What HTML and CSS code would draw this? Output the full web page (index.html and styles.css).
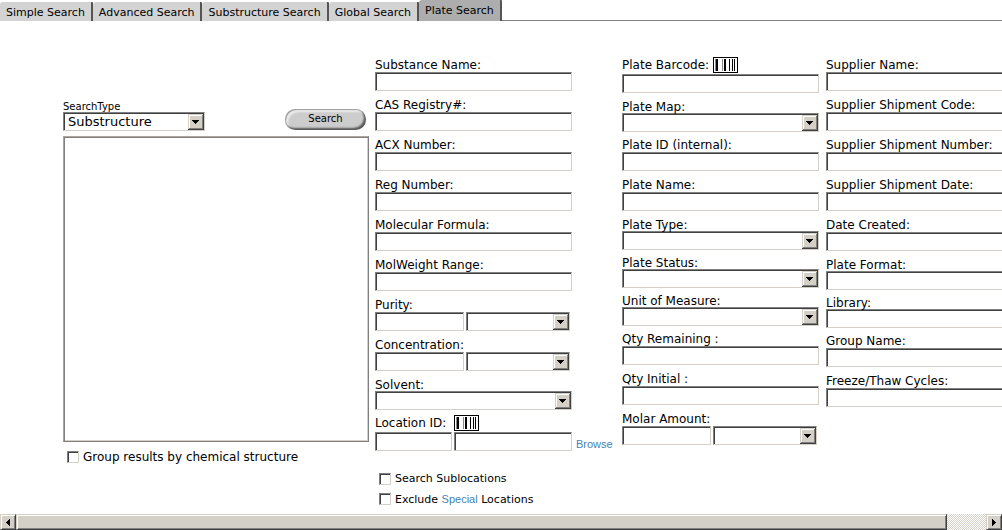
FILE: index.html
```html
<!DOCTYPE html>
<html lang="en">
<head>
<meta charset="utf-8">
<title>Plate Search</title>
<link rel="stylesheet" href="styles.css">
</head>
<body>
<svg class="defs" aria-hidden="true">
  <symbol id="barcode" viewBox="0 0 25 16" shape-rendering="crispEdges">
    <path fill="#fff" d="M0 0h25v16H0z"/>
    <path fill="#000" d="M0 0h25v16H0zM1 1v14h23V1z" fill-rule="evenodd"/>
    <path fill="#000" d="M3 2h2v12H3zM11 2h2v12h-2zM16 2h1v12h-1zM19 2h1v12h-1zM21 2h1v12h-1z"/>
    <path fill="#888" d="M2 2h1v12H2zM9 2h1v12H9z"/>
  </symbol>
</svg>
<nav class="tabs">
  <a class="tab" href="#">Simple Search</a>
  <a class="tab" href="#">Advanced Search</a>
  <a class="tab" href="#">Substructure Search</a>
  <a class="tab" href="#">Global Search</a>
  <a class="tab active" href="#">Plate Search</a>
</nav>
<main class="viewport">
  <form class="search">
    <section class="structure">
      <div class="toolbar">
        <div>
          <label class="small-label" for="type">SearchType</label>
          <select class="field type" id="type"><option>Substructure</option></select>
        </div>
        <button class="go" type="button">Search</button>
      </div>
      <div class="canvas"></div>
      <label class="check"><input type="checkbox"> Group results by chemical structure</label>
    </section>

    <section class="column">
      <div class="row"><label for="name">Substance Name:</label><input class="field" id="name"></div>
      <div class="row"><label for="cas">CAS Registry#:</label><input class="field" id="cas"></div>
      <div class="row"><label for="acx">ACX Number:</label><input class="field" id="acx"></div>
      <div class="row"><label for="reg">Reg Number:</label><input class="field" id="reg"></div>
      <div class="row"><label for="formula">Molecular Formula:</label><input class="field" id="formula"></div>
      <div class="row"><label for="weight">MolWeight Range:</label><input class="field" id="weight"></div>
      <div class="row"><label for="purity">Purity:</label>
        <div class="pair"><input class="field" id="purity"><select class="field" aria-label="Purity unit"></select></div></div>
      <div class="row"><label for="conc">Concentration:</label>
        <div class="pair"><input class="field" id="conc"><select class="field" aria-label="Concentration unit"></select></div></div>
      <div class="row tight"><label for="solvent">Solvent:</label><select class="field" id="solvent"></select></div>
      <div class="row coded"><label class="spaced" for="loc">Location ID: <svg class="barcode"><use href="#barcode"/></svg></label>
        <div class="pair location"><input class="field" id="loc"><input class="field" aria-label="Location name"><a class="link" href="#">Browse</a></div></div>
      <div class="options">
        <label class="check small"><input type="checkbox"> Search Sublocations</label>
        <div class="check small"><input type="checkbox" id="exclude"><span><label for="exclude">Exclude</label> <a class="link" href="#">Special</a> Locations</span></div>
      </div>
    </section>

    <section class="column">
      <div class="row coded"><label class="near" for="pbar">Plate Barcode:<svg class="barcode"><use href="#barcode"/></svg></label><input class="field" id="pbar"></div>
      <div class="row tight"><label for="map">Plate Map:</label><select class="field" id="map"></select></div>
      <div class="row"><label for="pid">Plate ID (internal):</label><input class="field" id="pid"></div>
      <div class="row"><label for="pname">Plate Name:</label><input class="field" id="pname"></div>
      <div class="row tight"><label for="ptype">Plate Type:</label><select class="field" id="ptype"></select></div>
      <div class="row tight"><label for="pstatus">Plate Status:</label><select class="field" id="pstatus"></select></div>
      <div class="row tight"><label for="unit">Unit of Measure:</label><select class="field" id="unit"></select></div>
      <div class="row"><label for="qrem">Qty Remaining :</label><input class="field" id="qrem"></div>
      <div class="row"><label for="qini">Qty Initial :</label><input class="field" id="qini"></div>
      <div class="row"><label for="molar">Molar Amount:</label>
        <div class="pair"><input class="field" id="molar"><select class="field" aria-label="Molar unit"></select></div></div>
    </section>

    <section class="column">
      <div class="row"><label for="sup">Supplier Name:</label><input class="field" id="sup"></div>
      <div class="row"><label for="scode">Supplier Shipment Code:</label><input class="field" id="scode"></div>
      <div class="row"><label for="snum">Supplier Shipment Number:</label><input class="field" id="snum"></div>
      <div class="row"><label for="sdate">Supplier Shipment Date:</label><input class="field" id="sdate"></div>
      <div class="row"><label for="created">Date Created:</label><input class="field" id="created"></div>
      <div class="row tight"><label for="format">Plate Format:</label><select class="field" id="format"></select></div>
      <div class="row tight"><label for="library">Library:</label><select class="field" id="library"></select></div>
      <div class="row"><label for="group">Group Name:</label><input class="field" id="group"></div>
      <div class="row"><label for="cycles">Freeze/Thaw Cycles:</label><input class="field" id="cycles"></div>
    </section>
  </form>
</main>
<div class="scrollbar">
  <button class="bevel arrow" type="button" aria-label="Scroll left"><svg viewBox="0 0 4 7" shape-rendering="crispEdges"><path d="M3 0h1v7H3zM2 1h1v5H2zM1 2h1v3H1zM0 3h1v1H0z"/></svg></button>
  <div class="track"><div class="bevel thumb"></div></div>
  <button class="bevel arrow" type="button" aria-label="Scroll right"><svg viewBox="0 0 4 7" shape-rendering="crispEdges"><path d="M0 0h1v7H0zM1 1h1v5H1zM2 2h1v3H2zM3 3h1v1H3z"/></svg></button>
</div>
</body>
</html>
```
FILE: styles.css
```css
* { box-sizing: border-box; }

body {
  margin: 0;
  height: 100vh;
  display: flex;
  flex-direction: column;
  overflow: hidden;
  background: #fff;
  color: #000;
  font: 12px/16px Verdana, "DejaVu Sans", sans-serif;
}

.defs { display: none; }

.tabs {
  display: flex;
  align-items: flex-end;
  height: 21px;
  flex: none;
  background: linear-gradient(#808080, #808080) 0 100% / 100% 1px no-repeat;
}

.tab {
  height: 19px;
  padding: 0 6px;
  border-right: 2px solid #555;
  border-radius: 3px 1px 0 0;
  background: #d3d3d3;
  color: #000;
  font-size: 11px;
  line-height: 21px;
  text-decoration: none;
  white-space: nowrap;
}

.tab.active {
  height: 21px;
  background: #adadad;
}

.viewport {
  flex: 1;
  min-height: 0;
  overflow: hidden;
}

.search {
  display: grid;
  grid-template-columns: 306px 241px 198px 198px;
  column-gap: 6px;
  width: max-content;
  padding: 35px 0 0 63px;
}

.structure { padding-top: 45px; }

.toolbar {
  display: flex;
  justify-content: space-between;
  align-items: flex-end;
  padding-right: 3px;
}

.small-label {
  display: block;
  font-size: 10px;
  line-height: 11px;
}

.field {
  display: block;
  width: 100%;
  height: 19px;
  margin: 0;
  padding: 0 2px;
  border: 1px solid;
  border-color: #808080 #d4d0c8 #d4d0c8 #808080;
  border-radius: 0;
  background-color: #fff;
  box-shadow: inset 1px 1px #404040;
  color: #000;
  font: inherit;
  outline: 0;
}

select.field {
  appearance: none;
  padding: 0 20px 0 4px;
  background: url("data:image/svg+xml,%3Csvg xmlns='http://www.w3.org/2000/svg' width='16' height='16' shape-rendering='crispEdges'%3E%3Cpath fill='%23404040' d='M0 0h16v16H0z'/%3E%3Cpath fill='%23d4d0c8' d='M0 0h15v15H0z'/%3E%3Cpath fill='%23808080' d='M1 1h14v14H1z'/%3E%3Cpath fill='%23fff' d='M1 1h13v13H1z'/%3E%3Cpath fill='%23d4d0c8' d='M2 2h12v12H2z'/%3E%3Cpath d='M4 6h7v1H4zM5 7h5v1H5zM6 8h3v1H6zM7 9h1v1H7z'/%3E%3C/svg%3E") right 1px / 16px 16px no-repeat #fff;
}

select.type {
  width: 142px;
  font-size: 13px;
}

.go {
  width: 81px;
  height: 21px;
  margin-bottom: 1px;
  padding: 0 0 2px;
  border: 0;
  border-radius: 11px;
  background: #ccc;
  box-shadow: inset -2px -2px 2px #555, inset 1px 1px 1px #999, inset 3px 3px 2px #eee;
  color: #000;
  font: inherit;
  font-size: 10px;
}

.canvas {
  height: 306px;
  margin-top: 5px;
  border: 1px solid;
  border-color: #aaa69e #808080 #808080 #aaa69e;
  box-shadow: inset 1px 1px #808080, inset -1px -1px #d4d0c8;
}

.check {
  display: flex;
  align-items: center;
  gap: 4px;
}

.check input {
  appearance: none;
  flex: none;
  width: 12px;
  height: 12px;
  margin: 0;
  border: 1px solid;
  border-color: #808080 #d4d0c8 #d4d0c8 #808080;
  box-shadow: inset 1px 1px #404040;
  background: #fff;
}

.structure .check { padding: 7px 0 0 4px; }

.small {
  height: 20px;
  font-size: 11px;
}

.row {
  padding-bottom: 5px;
  width: 197px;
}

.row > label {
  display: block;
  height: 16px;
  line-height: 18px;
  white-space: nowrap;
}

.row.tight { padding-bottom: 4px; }
.row.tight > label { height: 15px; }

.row.coded > label {
  display: flex;
  align-items: center;
  height: 18px;
}

.near { gap: 4px; }
.spaced { gap: 8px; }

.barcode {
  width: 25px;
  height: 16px;
}

.pair {
  display: grid;
  grid-template-columns: 89px 104px;
  gap: 2px;
}

.location {
  width: 241px;
  grid-template-columns: 77px 118px 40px;
}

.link {
  color: #4682b4;
  font: 11px/16px "Liberation Sans", Arial, sans-serif;
  text-decoration: none;
}

.location .link { padding: 4px 0 0 2px; }

.options { padding: 12px 0 0 4px; }

.scrollbar {
  display: flex;
  flex: none;
  height: 16px;
}

.bevel {
  border: 1px solid;
  border-color: #d4d0c8 #404040 #404040 #d4d0c8;
  background: #d4d0c8;
  box-shadow: inset 1px 1px #fff, inset -1px -1px #808080;
}

.arrow {
  width: 16px;
  padding: 0;
  display: flex;
  align-items: center;
  justify-content: center;
}

.arrow svg {
  width: 4px;
  height: 7px;
}

.track {
  flex: 1;
  background: repeating-conic-gradient(#d4d0c8 0 25%, #fff 0 50%) 0 0 / 2px 2px;
}

.thumb {
  width: 96%;
  height: 100%;
}
```
